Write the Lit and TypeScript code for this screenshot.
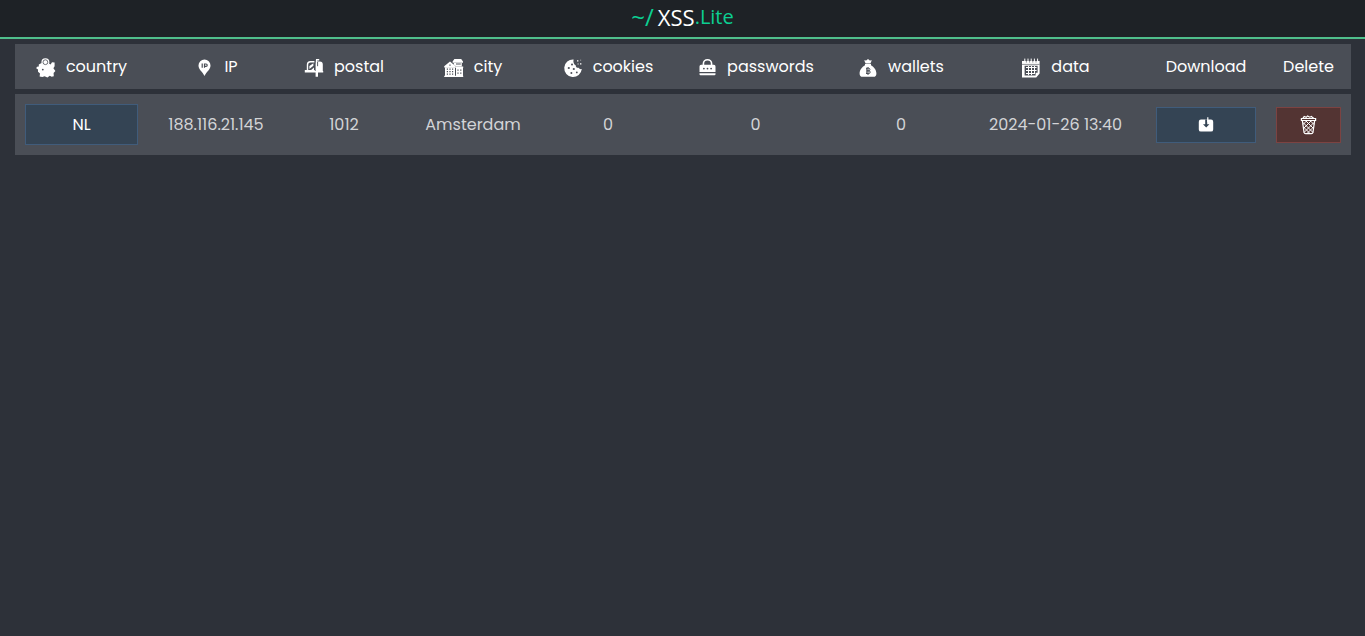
import { LitElement, html, css, svg, type TemplateResult } from "lit";
import { customElement, state } from "lit/decorators.js";

interface Entry {
  country: string;
  ip: string;
  postal: string;
  city: string;
  cookies: number;
  passwords: number;
  wallets: number;
  date: string;
}

const icon = (body: TemplateResult) =>
  html`<svg class="icon" viewBox="0 0 20 20" width="20" height="20" fill="currentColor" aria-hidden="true">${body}</svg>`;

const icons = {
  country: icon(svg`
    <path d="M2.8 6.4 5.6 5 9.4 9.6 13 5.4 14.6 6.4 16 4.2 18.600 4.600 18.600 8.200 17.400 10.200 19.400 13 17.600 15 17.800 18.200 15.600 18.800 13.800 17.800 11.400 19.400 8.600 18.200 6.400 19 3.600 18.600 4 15.400 2 13.800 2 11.600.2 10.200 1 8.800 2.800 8.400Z"/>
    <path d="M9.4.2a4 4 0 0 0-4 4c0 2.400 2.400 4.200 4 6.600 1.600-2.400 4-4.200 4-6.600a4 4 0 0 0-4-4Z"/>
    <circle class="line" stroke-width=".8" cx="9.400" cy="4.200" r="2.400"/>
    <circle class="cut" cx="6.800" cy="11.600" r=".9"/>`),
  ip: icon(svg`
    <path d="M10.500 1.600a6 6 0 0 0-6 6c0 4 4 6.200 6 10.400 2-4.200 6-6.400 6-10.400a6 6 0 0 0-6-6Z"/>
    <path class="line" stroke-width="1.200" d="M8.200 5.400v4.400M10.500 9.800V6H12a1.100 1.100 0 0 1 0 2.400h-1.500"/>`),
  postal: icon(svg`
    <path fill="none" stroke="currentColor" stroke-width="1.400" d="M3.500 12V6.800a3 3 0 0 1 3-3h3.900"/>
    <path d="M5.400 8 9.400 5.200v2.600L5.400 11ZM6.800 12.200 10 9.400v2.800ZM12 1h3.200v1.600h-2v.8h2.600a3 3 0 0 1 3 3v6.800h-7.200V6.400Z"/>
    <path class="line" stroke-width=".9" d="M13.600 4v4.200"/>
    <path d="M.8 12h10v1h8.400v1.600h-5.200V18.800h-2.400v-4.200H.8Z"/>`),
  city: icon(svg`
    <path d="M8.600 3.600 10.400 1h6.800L19 3.600v1.200H8.600ZM.2 8.200 6 3.400l5.600 4.800v1.200H.2ZM9.800 5h8v3.600h-5.600L9.800 6.400Z"/>
    <path d="M11.400 8.600h7.800v1.400h-7.800ZM12 10h7v8h-7ZM1 9.200h10V18H1ZM.2 17.800h19V19H.2Z"/>
    <path class="cut" d="M2.800 10.500h1.200v1.300H2.800ZM5.400 10.500h1.200v1.300H5.400ZM8 10.500h1.200v1.300H8ZM2.800 13h1.200v1.300H2.800ZM5.400 13h1.200v1.300H5.400ZM8 13h1.200v1.300H8ZM2.800 15.500h1.200v1.300H2.800ZM5.400 15.500h1.200v1.300H5.400ZM8 15.500h1.200v1.300H8ZM13.400 11.400h1.200v1.300h-1.200ZM16.200 11.400h1.200v1.300h-1.200ZM13.400 14.400h1.200v1.300h-1.200ZM16.200 14.400h1.200v1.300h-1.200ZM5.400 6.600h1.200v1.200H5.400ZM12 5.600h4.800v.8H12Z"/>`),
  cookies: icon(svg`
    <path d="M10.600 1.400A8.800 8.800 0 1 0 18.800 11c-1.200.4-2.600 0-3.200-1.200-1.600.2-3-.9-2.900-2.600-1.800-.6-2.800-3.400-2.100-5.800Z"/>
    <circle class="cut" cx="9" cy="6.400" r="1"/><circle class="cut" cx="5.800" cy="10" r="1.100"/>
    <circle class="cut" cx="10.800" cy="11" r="1.100"/><circle class="cut" cx="8.400" cy="15" r="1"/>
    <circle class="cut" cx="13.800" cy="14.400" r=".9"/>
    <path d="M14 2.200h1.400v1.400H14ZM17 5.200h1.400v1.400H17ZM14.600 5.600h1v1h-1ZM17.400 1.800h.7v.7h-.7Z"/>`),
  passwords: icon(svg`
    <path fill="none" stroke="currentColor" stroke-width="1.600" d="M6.400 7.400V5.800a4.100 4.100 0 0 1 8.200 0v1.600"/>
    <path d="M4.100 6.800h12.800a1.600 1.600 0 0 1 1.600 1.600V14h-16V8.400a1.600 1.600 0 0 1 1.600-1.600ZM2.500 15.200h16v1a1 1 0 0 1-1 1h-14a1 1 0 0 1-1-1Z"/>
    <circle class="cut" cx="6.900" cy="10.600" r=".9"/><circle class="cut" cx="10.500" cy="10.600" r=".9"/><circle class="cut" cx="14.100" cy="10.600" r=".9"/>`),
  wallets: icon(svg`
    <path d="M6.200 2.200 8.200 2.600 10 1l1.800 1.600 2-.4-1.400 3.200H7.600ZM7 6h6v1.200c3 1.600 5.400 5 5.400 8.200 0 2.200-1 3.400-3 3.400H4.600c-2 0-3-1.200-3-3.400C1.600 12.200 4 8.800 7 7.200Z"/>
    <path class="line" stroke-width="1" d="M8.800 10v5.600M8 10.200h2.600a1.200 1.200 0 0 1 0 2.600H9h1.800a1.300 1.300 0 0 1 0 2.700H8M10 9v8"/>`),
  data: icon(svg`
    <path fill-rule="evenodd" d="M1 3h17.600v12.600L15.200 19.600H1Zm2.600 4.800v9.800h11v-2.800h2v-7Z"/>
    <path fill="none" stroke="currentColor" stroke-width="1" d="M3.800.6v3M7 .6v3M10.200.6v3M13.400.6v3M16.600.6v3M7.500 8v9.200M10.500 8v9.200M13.500 8v7M5 9.500h10.600M5 12.500h10.600M5 15.500h9"/>
    <path class="line" stroke-width=".6" d="M1 6.400h17.600M5.400 3v1.600M8.600 3v1.600M11.800 3v1.600M15 3v1.600"/>`),
  download: icon(svg`
    <path d="M5 4.600h10a2.200 2.200 0 0 1 2.200 2.200v7.600A2.200 2.200 0 0 1 15 16.600H5a2.200 2.200 0 0 1-2.200-2.200V6.800A2.200 2.200 0 0 1 5 4.600Z"/>
    <path class="blue" d="M9.200 4.400h2v4.800h2.200L10.200 12.600 7 9.200h2.200Z"/>
    <path d="M11.200 2.200h1.200v5h-1.200Z"/>`),
  trash: icon(svg`
    <path fill="none" stroke="currentColor" stroke-width="1.200" d="M2.400 3.500h14.200v2H2.400ZM3.400 5.800l1.600 11.400c.2 1 .8 1.400 1.600 1.400h5.800c.8 0 1.400-.4 1.600-1.400L15.600 5.800M4 3.200 5.200 1.500l2 .8L8.600.9l2 1.300 2-.8.800 1.200 1.400.4"/>
    <path fill="none" stroke="currentColor" stroke-width="1" d="M4 9.500 7.500 6M4.500 13.500 12 6M5 17.500 15 7.500M8 18.500l6.500-6.500M11.500 6 15 9.500M7 6l7.500 7.500M4 7.500l10 10M4.500 12l6.500 6.500"/>`),
};

const columns: { name: string; icon?: TemplateResult }[] = [
  { name: "country", icon: icons.country },
  { name: "IP", icon: icons.ip },
  { name: "postal", icon: icons.postal },
  { name: "city", icon: icons.city },
  { name: "cookies", icon: icons.cookies },
  { name: "passwords", icon: icons.passwords },
  { name: "wallets", icon: icons.wallets },
  { name: "data", icon: icons.data },
  { name: "Download" },
  { name: "Delete" },
];

@customElement("app-root")
export class AppRoot extends LitElement {
  static styles = css`
    :host {
      display: block;
      min-height: 100vh;
      background: #2d3139;
      color: #fff;
      font: 16px/24px Poppins, Inter, sans-serif;
    }
    * { box-sizing: border-box; }
    .top {
      display: flex;
      justify-content: center;
      align-items: center;
      height: 39px;
      padding-bottom: 4px;
      background: #1e2226;
      border-bottom: 2px solid #4fbf8b;
    }
    .logo {
      display: flex;
      align-items: center;
      color: #0ccf92;
      font: 20px/32px "Open Sans", "Noto Sans", sans-serif;
      text-decoration: none;
    }
    .prompt { font-size: 24px; }
    .name {
      margin-left: 4px;
      color: #fff;
      font-size: 22px;
    }
    .content { padding: 0 14px 0 15px; }
    .list {
      width: 100%;
      table-layout: fixed;
      border-collapse: separate;
      border-spacing: 0 5px;
      text-align: center;
    }
    th, td { padding: 10px; background: #4a4e56; font-weight: 400; white-space: nowrap; }
    th { height: 45px; }
    td { height: 61px; color: #d3d4d7; }
    .country { width: 133px; }
    .ip { width: 136px; }
    .postal { width: 120px; }
    .city { width: 138px; }
    .cookies { width: 132px; }
    .passwords { width: 163px; }
    .wallets { width: 128px; }
    .data { width: 181px; }
    .download { width: 120px; }
    .delete { width: 85px; }
    .head { display: flex; justify-content: center; align-items: center; gap: 10px; }
    .icon { display: block; flex: none; }
    .head .icon { margin-top: 2px; }
    .cut { fill: #4a4e56; }
    .line { fill: none; stroke: #4a4e56; }
    .blue { fill: #344454; }
    .button {
      display: flex;
      justify-content: center;
      align-items: center;
      width: 100%;
      height: 36px;
      padding: 0;
      border: 1px solid #405c7b;
      background: #344454;
      color: #fff;
      font: inherit;
      cursor: pointer;
    }
    .tall { height: 41px; }
    .danger { background: #533433; border-color: #7c4342; }
  `;

  @state() private entries: Entry[] = [
    {
      country: "NL",
      ip: "188.116.21.145",
      postal: "1012",
      city: "Amsterdam",
      cookies: 0,
      passwords: 0,
      wallets: 0,
      date: "2024-01-26 13:40",
    },
  ];

  private remove(entry: Entry) {
    this.entries = this.entries.filter((item) => item !== entry);
  }

  render() {
    return html`
      <header class="top">
        <a class="logo" href="#"><span class="prompt">~/</span><span class="name">XSS</span><span>.Lite</span></a>
      </header>
      <main class="content">
        <table class="list">
          <thead>
            <tr>
              ${columns.map(
                (column) => html`<th scope="col" class=${column.name.toLowerCase()}>
                  <div class="head">${column.icon}<span>${column.name}</span></div>
                </th>`,
              )}
            </tr>
          </thead>
          <tbody>
            ${this.entries.map(
              (entry) => html`<tr>
                <td><button class="button tall" type="button">${entry.country}</button></td>
                <td>${entry.ip}</td>
                <td>${entry.postal}</td>
                <td>${entry.city}</td>
                <td>${entry.cookies}</td>
                <td>${entry.passwords}</td>
                <td>${entry.wallets}</td>
                <td>${entry.date}</td>
                <td><button class="button" type="button" aria-label="Download">${icons.download}</button></td>
                <td>
                  <button class="button danger" type="button" aria-label="Delete" @click=${() => this.remove(entry)}>
                    ${icons.trash}
                  </button>
                </td>
              </tr>`,
            )}
          </tbody>
        </table>
      </main>
    `;
  }
}
